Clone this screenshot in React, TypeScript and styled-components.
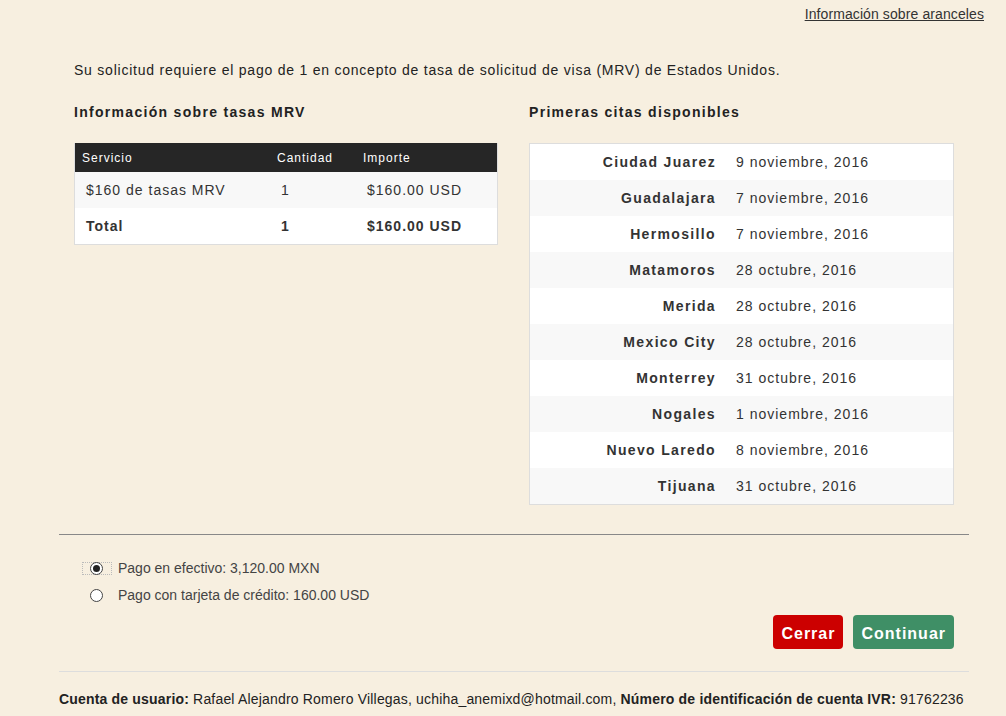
import React from "react";
import styled, { createGlobalStyle } from "styled-components";

const Global = createGlobalStyle`
  html, body { margin: 0; padding: 0; background: #f7efe0; }
  body { font-family: "Liberation Sans", Arial, sans-serif; color: #333; }
`;

const Page = styled.div`
  width: 1006px;
  height: 716px;
  overflow: hidden;
  box-sizing: border-box;
  padding: 0 22px 0 59px;
  display: flex;
  flex-direction: column;
`;

const TopBar = styled.div`
  display: flex;
  justify-content: flex-end;
  padding-top: 6px;
  height: 17px;
`;

const TopLink = styled.a`
  font-size: 14px;
  letter-spacing: 0.1px;
  color: #333;
  text-decoration: underline;
  line-height: 17px;
  cursor: pointer;
`;

const Content = styled.div`
  width: 880px;
  padding: 0 15px;
`;

const Intro = styled.p`
  margin: 39px 0 0;
  font-size: 14px;
  letter-spacing: 0.77px;
  line-height: 17px;
  color: #222;
`;

const Columns = styled.div`
  display: grid;
  grid-template-columns: 424px 425px;
  column-gap: 31px;
  margin-top: 25px;
  align-items: start;
`;

const Heading = styled.h3`
  margin: 0 0 22px;
  font-size: 14px;
  font-weight: bold;
  letter-spacing: 1.3px;
  line-height: 17px;
  color: #222;
`;

const Table = styled.table`
  width: 100%;
  table-layout: fixed;
  border-collapse: collapse;
  border: 1px solid #ddd;
  border-top: none;
  background: #fff;
`;

const HeadCell = styled.th<{ $w?: number }>`
  background: #262626;
  color: #fff;
  font-weight: normal;
  text-align: left;
  font-size: 12px;
  letter-spacing: 1px;
  height: 29px;
  padding: 0 0 0 7px;
  ${(p) => (p.$w ? `width: ${p.$w}px;` : "")}
`;

const Row = styled.tr<{ $alt?: boolean }>`
  background: ${(p) => (p.$alt ? "#f8f8f8" : "#fff")};
`;

const Cell = styled.td<{ $bold?: boolean }>`
  height: 36px;
  padding: 0 0 0 11px;
  font-size: 14px;
  letter-spacing: 1px;
  color: #333;
  font-weight: ${(p) => (p.$bold ? "bold" : "normal")};
`;

const CityTable = styled.div`
  border: 1px solid #ddd;
  background: #fff;
`;

const CityRow = styled.div<{ $alt?: boolean }>`
  display: grid;
  grid-template-columns: 186px 1fr;
  column-gap: 20px;
  height: 36px;
  align-items: center;
  background: ${(p) => (p.$alt ? "#f8f8f8" : "#fff")};
  font-size: 14px;
  color: #333;
`;

const City = styled.span`
  text-align: right;
  font-weight: bold;
  letter-spacing: 1.35px;
`;

const DateText = styled.span`
  letter-spacing: 1px;
`;

const Rule = styled.hr<{ $light?: boolean }>`
  width: 910px;
  margin: 0;
  border: none;
  height: 1px;
  background: ${(p) => (p.$light ? "#ddd" : "#888")};
`;

const RuleWrap = styled.div<{ $top: number }>`
  margin-top: ${(p) => p.$top}px;
`;

const Options = styled.div`
  padding: 25px 0 0 23px;
  display: flex;
  flex-direction: column;
  gap: 10px;
`;

const Option = styled.label`
  display: flex;
  align-items: center;
  gap: 6px;
  font-size: 14px;
  color: #444;
  line-height: 17px;
  cursor: pointer;
`;

const RadioWrap = styled.span<{ $focus?: boolean }>`
  box-sizing: border-box;
  width: 30px;
  height: 13px;
  display: flex;
  align-items: center;
  justify-content: flex-end;
  padding-right: 8px;
  border: 1px dotted ${(p) => (p.$focus ? "#bbb" : "transparent")};
  overflow: visible;
`;

const Radio = styled.span<{ $checked?: boolean }>`
  flex: none;
  box-sizing: border-box;
  width: 13px;
  height: 13px;
  border: 1px solid #444;
  border-radius: 50%;
  background: #fff;
  display: flex;
  align-items: center;
  justify-content: center;
  &::after {
    content: "";
    width: 7px;
    height: 7px;
    border-radius: 50%;
    background: ${(p) => (p.$checked ? "#222" : "transparent")};
  }
`;

const Buttons = styled.div`
  display: flex;
  justify-content: flex-end;
  gap: 10px;
  width: 895px;
  margin-top: 11px;
`;

const Button = styled.button<{ $variant: "red" | "green" }>`
  height: 34px;
  border: none;
  border-radius: 4px;
  padding: 3px 8px 0;
  font-family: "Liberation Sans", Arial, sans-serif;
  font-size: 16px;
  font-weight: bold;
  letter-spacing: 1px;
  color: #fff;
  background: ${(p) => (p.$variant === "red" ? "#cc0000" : "#3f8f66")};
  cursor: pointer;
`;

const Footer = styled.div`
  margin-top: 19px;
  font-size: 14px;
  letter-spacing: 0.18px;
  line-height: 17px;
  color: #222;
  white-space: nowrap;
`;

const cities: [string, string][] = [
  ["Ciudad Juarez", "9 noviembre, 2016"],
  ["Guadalajara", "7 noviembre, 2016"],
  ["Hermosillo", "7 noviembre, 2016"],
  ["Matamoros", "28 octubre, 2016"],
  ["Merida", "28 octubre, 2016"],
  ["Mexico City", "28 octubre, 2016"],
  ["Monterrey", "31 octubre, 2016"],
  ["Nogales", "1 noviembre, 2016"],
  ["Nuevo Laredo", "8 noviembre, 2016"],
  ["Tijuana", "31 octubre, 2016"],
];

export default function App() {
  return (
    <>
      <Global />
      <Page>
        <TopBar>
          <TopLink>Información sobre aranceles</TopLink>
        </TopBar>
        <Content>
          <Intro>
            Su solicitud requiere el pago de 1 en concepto de tasa de solicitud de visa (MRV) de Estados Unidos.
          </Intro>
          <Columns>
            <div>
              <Heading>Información sobre tasas MRV</Heading>
              <Table>
                <thead>
                  <tr>
                    <HeadCell $w={188}>Servicio</HeadCell>
                    <HeadCell $w={79}>Cantidad</HeadCell>
                    <HeadCell>Importe</HeadCell>
                  </tr>
                </thead>
                <tbody>
                  <Row $alt>
                    <Cell>$160 de tasas MRV</Cell>
                    <Cell>1</Cell>
                    <Cell>$160.00 USD</Cell>
                  </Row>
                  <Row>
                    <Cell $bold>Total</Cell>
                    <Cell $bold>1</Cell>
                    <Cell $bold>$160.00 USD</Cell>
                  </Row>
                </tbody>
              </Table>
            </div>
            <div>
              <Heading>Primeras citas disponibles</Heading>
              <CityTable>
                {cities.map(([c, d], i) => (
                  <CityRow key={c} $alt={i % 2 === 1}>
                    <City>{c}</City>
                    <DateText>{d}</DateText>
                  </CityRow>
                ))}
              </CityTable>
            </div>
          </Columns>
        </Content>
        <RuleWrap $top={29}>
          <Rule />
        </RuleWrap>
        <Options>
          <Option>
            <RadioWrap $focus>
              <Radio $checked />
            </RadioWrap>
            Pago en efectivo: 3,120.00 MXN
          </Option>
          <Option>
            <RadioWrap>
              <Radio />
            </RadioWrap>
            Pago con tarjeta de crédito: 160.00 USD
          </Option>
        </Options>
        <Buttons>
          <Button $variant="red">Cerrar</Button>
          <Button $variant="green">Continuar</Button>
        </Buttons>
        <RuleWrap $top={22}>
          <Rule $light />
        </RuleWrap>
        <Footer>
          <b>Cuenta de usuario:</b> Rafael Alejandro Romero Villegas, uchiha_anemixd@hotmail.com,{" "}
          <b>Número de identificación de cuenta IVR:</b> 91762236
        </Footer>
      </Page>
    </>
  );
}
